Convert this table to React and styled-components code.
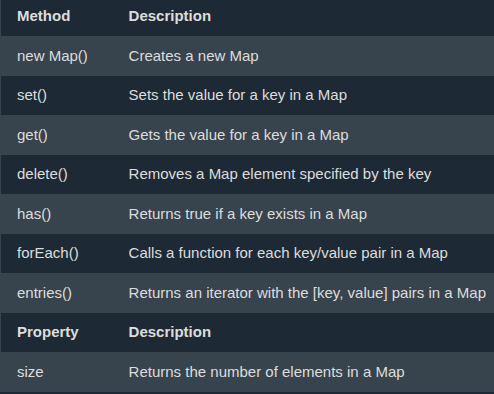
//* Imports
import styled, { createGlobalStyle } from "styled-components";

//* Global Style
const GlobalStyle = createGlobalStyle`
  html, body {
    margin: 0;
    padding: 0;
    background: #1d2a35;
    overflow: hidden;
  }
  body {
    font-family: "Liberation Sans", Arial, sans-serif;
    font-size: 15px;
    line-height: 1.5;
    color: #dddddd;
  }
`;

//* Table Style
const Table = styled.table`
  width: 100%;
  margin-top: -3px;
  border-collapse: collapse;
  border-spacing: 0;
  border-left: 1px solid #38444d;
`;

const Row = styled.tr`
  background: ${({ $shaded }) => ($shaded ? "#38444d" : "#1d2a35")};
  border-bottom: 1px solid #38444d;
`;

const HeadCell = styled.th`
  padding: 8px;
  text-align: left;
  vertical-align: top;
  font-weight: bold;
  color: #dddddd;

  &:first-child {
    padding-left: 16px;
    width: 96px;
  }
`;

const Cell = styled.td`
  padding: 8px;
  text-align: left;
  vertical-align: top;
  white-space: nowrap;
  color: #dddddd;

  &:first-child {
    padding-left: 16px;
    width: 96px;
  }
`;

//* Data
const methods = [
  ["new Map()", "Creates a new Map"],
  ["set()", "Sets the value for a key in a Map"],
  ["get()", "Gets the value for a key in a Map"],
  ["delete()", "Removes a Map element specified by the key"],
  ["has()", "Returns true if a key exists in a Map"],
  ["forEach()", "Calls a function for each key/value pair in a Map"],
  ["entries()", "Returns an iterator with the [key, value] pairs in a Map"],
];

const properties = [["size", "Returns the number of elements in a Map"]];

//* App JSX
function App() {
  return (
    <>
      <GlobalStyle />
      <Table>
        <tbody>
          <Row>
            <HeadCell>Method</HeadCell>
            <HeadCell>Description</HeadCell>
          </Row>
          {methods.map(([name, desc], i) => (
            <Row key={name} $shaded={i % 2 === 0}>
              <Cell>{name}</Cell>
              <Cell>{desc}</Cell>
            </Row>
          ))}
          <Row>
            <HeadCell>Property</HeadCell>
            <HeadCell>Description</HeadCell>
          </Row>
          {properties.map(([name, desc]) => (
            <Row key={name} $shaded>
              <Cell>{name}</Cell>
              <Cell>{desc}</Cell>
            </Row>
          ))}
        </tbody>
      </Table>
    </>
  );
}

export default App;
